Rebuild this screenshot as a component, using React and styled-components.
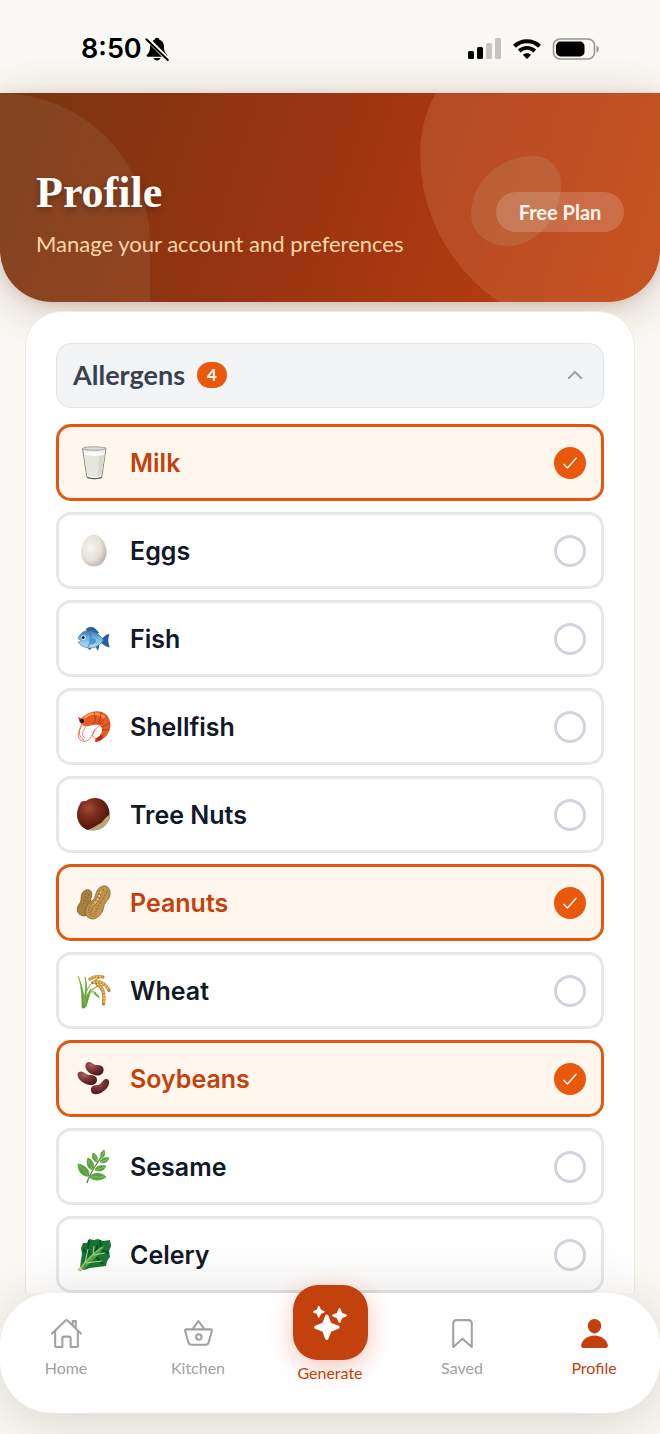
import React, { useState } from 'react';
import styled, { createGlobalStyle } from 'styled-components';
import {
  IoHomeOutline,
  IoBasketOutline,
  IoBookmarkOutline,
  IoPerson,
  IoSparkles,
  IoChevronUp,
  IoCheckmark,
} from 'react-icons/io5';

const GlobalStyle = createGlobalStyle`
  * {
    box-sizing: border-box;
  }

  body {
    margin: 0;
    background: #faf9f5;
    font-family: Lato, "Open Sans", sans-serif;
    -webkit-font-smoothing: antialiased;
  }

  button {
    font-family: inherit;
    border: 0;
    cursor: pointer;
  }
`
const Screen = styled.div`
  height: 100vh;
  display: flex;
  flex-direction: column;
  overflow: hidden;
`
const StatusBar = styled.div`
  flex: none;
  height: 93px;
  padding: 4px 60px 0 81px;
  display: flex;
  align-items: center;
  justify-content: space-between;
`
const StatusGroup = styled.div`
  display: flex;
  align-items: center;
  gap: ${props => props.$gap}px;
`
const Time = styled.span`
  font-family: Inter, sans-serif;
  font-size: 27px;
  line-height: 32px;
  font-weight: 600;
  color: #000;
`
const Header = styled.header`
  flex: none;
  position: relative;
  display: flex;
  align-items: center;
  justify-content: space-between;
  padding: 72px 36px 43px;
  border-radius: 0 0 52px 52px;
  background: linear-gradient(108deg, #78350f 0%, #9a3412 45%, #c2410c 100%);
  box-shadow: 0 8px 48px rgba(100, 50, 20, 0.26), 0 2px 12px rgba(100, 50, 20, 0.14);
`
const Shapes = styled.div`
  position: absolute;
  inset: 0;
  overflow: hidden;
  border-radius: inherit;
`
const LeftShape = styled.div`
  position: absolute;
  left: 0;
  top: 0;
  bottom: 0;
  width: 150px;
  border-radius: 0 150px 0 0;
  background: rgba(190, 180, 150, 0.12);
`
const RightShape = styled.div`
  position: absolute;
  right: -60px;
  top: -60px;
  width: 300px;
  height: 300px;
  border-radius: 40% 60% 40% 60% / 40% 60% 40% 60%;
  background: rgba(220, 130, 88, 0.28);
`
const SmallShape = styled.div`
  position: absolute;
  right: 99px;
  top: 63px;
  width: 90px;
  height: 90px;
  border-radius: 70% 30% 60% 40% / 65% 30% 70% 35%;
  background: rgba(190, 150, 110, 0.25);
`
const Heading = styled.div`
  position: relative;
`
const Title = styled.h1`
  margin: 0 0 8px;
  font-family: "Liberation Serif", serif;
  font-size: 44px;
  line-height: 56px;
  font-weight: bold;
  color: #fff;
  text-shadow: 0 3px 6px rgba(0, 0, 0, 0.3);
`
const Subtitle = styled.p`
  margin: 0;
  font-size: 22px;
  line-height: 30px;
  color: #fed7aa;
`
const Plan = styled.span`
  position: relative;
  min-width: 128px;
  padding: 0 20px;
  border-radius: 20px;
  background: rgba(255, 255, 255, 0.17);
  font-size: 20px;
  line-height: 40px;
  font-weight: bold;
  text-align: center;
  color: #fff7ed;
`
const Content = styled.main`
  flex: 1;
  min-height: 0;
  overflow: hidden;
  padding: 9px 25px 0;
`
const Card = styled.section`
  position: relative;
  padding: 31px 30px;
  border: 1px solid #efe9e4;
  border-radius: 36px;
  background: #fff;
`
const SectionToggle = styled.button`
  width: 100%;
  height: 65px;
  margin-bottom: 16px;
  padding: 0 17px 2px 16px;
  display: flex;
  align-items: center;
  gap: 12px;
  border: 1px solid #e2e5ea;
  border-radius: 15px;
  background: #f3f4f6;
  color: #9ca3af;

  svg {
    margin-left: auto;
  }
`
const SectionName = styled.span`
  font-size: 27px;
  line-height: 32px;
  font-weight: bold;
  color: #374151;
`
const Count = styled.span`
  width: 30px;
  border-radius: 13px;
  background: #ea580c;
  font-size: 17px;
  line-height: 26px;
  font-weight: bold;
  text-align: center;
  color: #fff;
`
const Options = styled.div`
  display: flex;
  flex-direction: column;
  gap: 11px;
`
const Option = styled.label`
  height: 77px;
  padding: 0 15px 0 17px;
  display: flex;
  align-items: center;
  border: 3px solid ${props => props.$on ? '#e2560f' : '#e5e7eb'};
  border-radius: 15px;
  background: ${props => props.$on ? '#fff7ed' : '#fff'};
  color: ${props => props.$on ? '#c2410c' : '#111827'};
  font-family: Inter, sans-serif;
  font-size: 25px;
  line-height: 32px;
  font-weight: 600;
  cursor: pointer;
`
const OptionName = styled.span`
  flex: 1;
  margin-left: 18px;
`
const Tick = styled.span`
  display: grid;
  place-items: center;
  color: #fff;

  input, svg {
    grid-area: 1 / 1;
  }

  svg {
    pointer-events: none;
  }
`
const Checkbox = styled.input`
  appearance: none;
  width: 32px;
  height: 32px;
  margin: 0;
  border: 3px solid #d1d5db;
  border-radius: 50%;
  background: #fff;
  cursor: pointer;

  &:checked {
    border-color: #ea580c;
    background: #ea580c;
  }
`
const TabBar = styled.nav`
  flex: none;
  position: relative;
  height: 120px;
  margin-bottom: 21px;
  display: flex;
  border-radius: 52px;
  background: #fff;
  box-shadow: 0 8px 60px rgba(90, 60, 40, 0.2);
`
const Tab = styled.button`
  flex: 1;
  padding: 24px 0 0;
  display: flex;
  flex-direction: column;
  align-items: center;
  gap: 8px;
  background: none;
  font-size: 16px;
  line-height: 20px;
  color: ${props => props.$active ? '#c2410c' : '#a3a09d'};
`
const GenerateTab = styled(Tab)`
  margin-top: -8px;
  padding: 0;
  gap: 3px;
`
const GenerateIcon = styled.span`
  width: 75px;
  height: 75px;
  display: grid;
  place-items: center;
  border-radius: 25px;
  background: #c2410c;
  color: #fff;
  box-shadow: 0 6px 24px rgba(220, 60, 20, 0.3);
`

const BellOff = () => (
  <svg width="24" height="24" viewBox="0 0 24 24" aria-hidden="true">
    <path d="M12 .8c1.3 0 2.2.8 2.4 2 3 1 4.600 3.500 4.600 6.700 0 4.500 1 6.300 3 8.300.8.900.3 1.900-.8 1.900H2.800c-1.200 0-1.600-1-.8-1.900 2-2 3-3.800 3-8.300 0-3.200 1.600-5.700 4.600-6.700.2-1.200 1.100-2 2.400-2z" />
    <path d="M8.500 21h7c-.4 1.500-1.700 2.400-3.500 2.400S8.900 22.500 8.500 21z" />
    <path d="M2 1.500l21 21.300" stroke="#faf9f5" strokeWidth="4.500" />
    <path d="M1.300 2.200L22.800 23" stroke="#000" strokeWidth="1.900" strokeLinecap="round" />
  </svg>
)

const Signal = () => (
  <svg width="34" height="22" viewBox="0 0 34 22" aria-hidden="true">
    <rect x="0" y="13" width="6" height="8" rx="1.500" />
    <rect x="9" y="9" width="6" height="12" rx="1.500" />
    <rect x="18" y="5" width="6" height="16" rx="1.500" fill="#c6c5c3" />
    <rect x="27" y="0" width="6" height="21" rx="1.500" fill="#c6c5c3" />
  </svg>
)

const Wifi = () => (
  <svg width="30" height="22" viewBox="0 0 30 22" aria-hidden="true">
    <path d="M2.500 8.200c7-6.600 18-6.600 25 0" fill="none" stroke="#000" strokeWidth="4.200" />
    <path d="M7.200 13c4.400-4.100 11.200-4.100 15.600 0" fill="none" stroke="#000" strokeWidth="3.800" />
    <path d="M10.800 16.800c2.400-2.200 6-2.200 8.400 0L15 21z" />
  </svg>
)

const Battery = () => (
  <svg width="48" height="22" viewBox="0 0 48 22" aria-hidden="true">
    <rect x="1.500" y="1" width="41" height="20" rx="6.500" fill="none" stroke="#999794" strokeWidth="1.600" />
    <rect x="4" y="3.600" width="28.500" height="14.800" rx="4.500" />
    <path d="M44.500 7.500c3 1 3 6 0 7z" fill="#999794" />
  </svg>
)

const Milk = () => (
  <>
    <path d="M6.500 3.500L10.800 32c1.500 2.300 13.500 2.300 15 0L30 3.500z" fill="#eeeeec" stroke="#8b8e8e" strokeWidth="1" />
    <path d="M8 9l3.300 21c1.200 1.600 12.700 1.600 14 0L28.700 9c-4 1.500-17 1.500-20.700 0z" fill="#e6e6df" />
    <path d="M23 10l-1 20.500c1.500 0 2.800-.2 3.300-1L28.500 9z" fill="#d8d8d0" />
    <ellipse cx="18.300" cy="9" rx="10.300" ry="1.900" fill="#fffffa" />
    <ellipse cx="18.300" cy="3.500" rx="11.800" ry="1.700" fill="#dcdedc" stroke="#999d9c" strokeWidth=".9" />
    <path d="M11 32.300c3 1.800 12 1.800 14.700 0" fill="none" stroke="#5f6363" strokeWidth="1.200" />
  </>
)

const Egg = () => (
  <>
    <radialGradient id="egg" cx=".38" cy=".4" r=".68">
      <stop offset="0" stopColor="#f7f4f0" />
      <stop offset=".6" stopColor="#e5e0da" />
      <stop offset="1" stopColor="#b9afa7" />
    </radialGradient>
    <path d="M17.500 1.800C24 1.800 30.500 10 30.500 19c0 8.500-5.500 14.500-12.700 14.500S5 27.500 5 19C5 10 11 1.800 17.500 1.800z" fill="url(#egg)" />
  </>
)

const Fish = () => (
  <>
    <linearGradient id="fish" x1="0" y1="0" x2="0" y2="1">
      <stop offset="0" stopColor="#3976b2" />
      <stop offset=".5" stopColor="#74bce5" />
      <stop offset="1" stopColor="#b5dff2" />
    </linearGradient>
    <path d="M10 8.500c3-3.500 9-3.200 12.500 3.500l-5 1zM24 19c4-2 6-6 9-5.500-1.500 4-1.500 8 .3 12.500-4-.5-6-3-9.300-5z" fill="#28619c" stroke="#1e4978" strokeWidth=".6" />
    <path d="M11 24l2 5c2-.5 2.500-2 3.500-4zM19 25l3 5 1.500-7z" fill="#28619c" />
    <path d="M2 17.500C5 10 12 8 18 10.500c4 1.700 6.500 5 9.500 8.500-3 4.500-7.500 8-13.500 8-5 0-10-2.500-12-6 1.500 0 2.500-.5 3-1.500z" fill="url(#fish)" stroke="#366b9a" strokeWidth=".6" />
    <path d="M12 9.500c4 5 4 11-.5 17" fill="none" stroke="#3c7bae" />
    <path d="M13 18c5-2 7 0 7 2-1 3-4 4-6 3z" fill="#4a98cc" />
    <circle cx="7.500" cy="16.500" r="2.200" fill="#fff" />
    <circle cx="7.200" cy="16.500" r="1.500" fill="#111" />
  </>
)

const Shrimp = () => (
  <>
    <path d="M10 14C1 20 0 29 6 32c6 2 10-4 13-12M7 13C2 20 2 28 8 31M12 15c-6 6-7 12-3 14M23 17c-8 6-8 12-2 13 3 0 5-1 6-4" fill="none" stroke="#df6e56" strokeWidth=".9" />
    <path d="M3 12C9 4 18 .5 26 3c8 3 10 12 7.500 18-1.500 4.500-4 7.500-7.500 9.500-2 2-5 3-7.500 2 .5-2 3-4 5-5 2.500-3 3.500-7 1.500-10-3-3-8-1.500-12-.5-4 1-7-.5-10-5z" fill="#e55b24" />
    <path d="M8 9c6-5.500 15-6 21 0" fill="none" stroke="#ff9b50" strokeWidth="2.500" />
    <path d="M18 3c1 4 2 7 0 12M25 3c0 5-1 8-3 12M31 7c-2 3-5 5-7 8M34 14l-8 4M33.500 21l-7.500 0M27 29l-3-4" fill="none" stroke="#a93416" strokeWidth=".9" />
    <path d="M2 8l6 3-4 2zM19 32c2-5 5-5 8-6l-2 5z" fill="#b52c1d" />
    <circle cx="6" cy="12" r="2" fill="#291612" />
  </>
)

const Chestnut = () => (
  <>
    <radialGradient id="nut" cx=".36" cy=".32" r=".72">
      <stop offset="0" stopColor="#a04a33" />
      <stop offset=".4" stopColor="#7c2b1b" />
      <stop offset="1" stopColor="#4c130b" />
    </radialGradient>
    <path d="M31 9c5 7 4 14-1 19-5 6-14 7-21 4z" fill="#b5a778" />
    <path d="M4 7c1-3 3-3 6-3C15 0 23 0 28 4c4 4 6 9 5 14-4 3-5 5-8 8-5 3-9 5-13 7C5 31 1 24 1 18c0-4 1-8 3-11z" fill="url(#nut)" />
  </>
)

const Peanuts = () => (
  <>
    <path d="M10 5c4-1 7 2 5.500 6-1 3-1 4 0 7 2 6-2 12-7 13-5 0-8-4-7-8 .5-4 3-4 3.500-8C5 10 6 6 10 5z" fill="#a8803f" stroke="#745125" strokeWidth=".7" />
    <path d="M27 1c5-1 8 4 7 9-1 6-5 6-6 11-1 7-6 13-12 13-6-1-8-6-6-11 2-6 7-6 9-11 1-5 3-10 8-11z" fill="#c0944c" stroke="#81592a" strokeWidth=".7" />
    <path d="M28 4c-6 5-2 9-7 14-5 4-7 8-6 13M31 6c-3 7-5 10-8 14-3 5-3 8-6 12M24 5c-2 7-3 9-8 13-3 3-4 6-3 10M10 8c-1 6-1 9-4 13M13 9c-3 7 0 9-4 15" fill="none" stroke="#8d6632" strokeDasharray="2 1.200" />
    <path d="M25 6c-2 6-3 10-8 14" fill="none" stroke="#eed28f" strokeWidth="1.500" strokeDasharray="2 2" />
  </>
)

const Wheat = () => (
  <>
    <path d="M6 34C6 22 5 10 2 3c4 9 6 18 6.500 26C9 19 10 9 9 4c3 9 1 20 0 31H6zM9 29c2-8 5-12 6-13-1 5-3 11-5 18z" fill="#5ca337" stroke="#5ca337" strokeWidth=".6" />
    <path d="M7 30C9 18 15 7 26 4M8 32c2-12 9-19 21-20M9 31c2-12 7-14 11-11" fill="none" stroke="#83a843" strokeWidth="1.100" />
    <path d="M14 6c4-3 8-3 13-2M17 9.500c7-2 12-.5 16 8M21 11c6 3 8 9 6.500 20" fill="none" stroke="#b97a2b" strokeWidth="3.200" strokeLinecap="round" />
    <path d="M14 6c4-3 8-3 13-2M17 9.500c7-2 12-.5 16 8M21 11c6 3 8 9 6.500 20" fill="none" stroke="#eab656" strokeWidth="2.400" strokeDasharray="2.400 .8" />
    <path d="M17 20c3-1 6 2 7 6-3-2-4-3-7-6z" fill="#72b64a" />
  </>
)

const Beans = () => (
  <>
    <radialGradient id="bean" cx=".35" cy=".25" r=".8">
      <stop offset="0" stopColor="#a36563" />
      <stop offset=".45" stopColor="#7a3436" />
      <stop offset="1" stopColor="#4a181c" />
    </radialGradient>
    <path d="M11 1.500c4-2 6 2 9 2.500 5 0 8 1 7.500 5.500-.5 5-6 6-10.500 4C11 12 7 5 11 1.500z" fill="url(#bean)" />
    <path d="M3 11c4-2 6 2 10 3 5 0 8 1 8 5 0 5-6 6-11 4C4 21-1 14 3 11z" fill="url(#bean)" />
    <path d="M31 18c4 1 2 8-2 11-5 5-13 6-14 1-1-5 3-6 7-6 4-1 5-7 9-6z" fill="url(#bean)" />
  </>
)

const Herb = () => (
  <>
    <path d="M11 34C13 25 20 16 26 7" fill="none" stroke="#5b7d42" strokeWidth="1.300" />
    <path d="M26 9c-3-3 0-7 2-8 2 4 0 7-2 8zM24 13c1-4 5-5 9-4-1 4-5 6-9 4zM21 13c-5-1-5-6-4-9 4 2 5 5 4 9zM19 21c1-4 6-5 11-4-2 5-7 6-11 4zM17 21c-6-1-7-8-5-12 5 2 7 8 5 12zM13 28c5-5 12-5 17 0-5 4-12 4-17 0zM13 27C7 28 2 23 2 15c6 1 12 5 11 12z" fill="#56a13f" stroke="#56a13f" strokeWidth=".8" />
    <path d="M28 2l-2 6M32 10l-7 3M18 6l3 6M29 18l-9 3M12 11l5 10M29 28H15M3 16l9 10" fill="none" stroke="#a1cf70" strokeWidth=".7" />
  </>
)

const Lettuce = () => (
  <>
    <path d="M7 6l4 0 2-4 5 1 4-1 5 2 7-1 1 6-2 5 1 6-3 4-1 5-8 1-8 1-6 2-4-2 1-8 1-6-1-6z" fill="#187635" />
    <path d="M13 3l-1 9 2 5M24 3l1 10 8 3M7 12l5 6M20 20l7 7M22 8l-3 7" fill="none" stroke="#0a5427" strokeWidth="2" />
    <path d="M2 33C8 23 16 17 29 8 23 18 15 26 5 34z" fill="#5aa04a" />
    <path d="M2 34C10 25 17 16 26 10M9 26l3-14M10 26l16-2M17 18l1-9M18 18l11-2" fill="none" stroke="#b5d894" strokeWidth="1" />
    <path d="M1.500 32l3-2 2 2-2 3z" fill="#d8c79c" />
  </>
)

const allergens = [
  { name: 'Milk', art: Milk },
  { name: 'Eggs', art: Egg },
  { name: 'Fish', art: Fish },
  { name: 'Shellfish', art: Shrimp },
  { name: 'Tree Nuts', art: Chestnut },
  { name: 'Peanuts', art: Peanuts },
  { name: 'Wheat', art: Wheat },
  { name: 'Soybeans', art: Beans },
  { name: 'Sesame', art: Herb },
  { name: 'Celery', art: Lettuce },
]

const App = () => {
  const [selected, setSelected] = useState(['Milk', 'Peanuts', 'Soybeans', 'Mustard'])
  const [open, setOpen] = useState(true)

  const toggle = (name) => {
    setSelected(selected.includes(name) ? selected.filter(n => n !== name) : [...selected, name])
  }

  return (
    <Screen>
      <GlobalStyle />
      <StatusBar>
        <StatusGroup $gap={3}>
          <Time>8:50</Time>
          <BellOff />
        </StatusGroup>
        <StatusGroup $gap={10}>
          <Signal />
          <Wifi />
          <Battery />
        </StatusGroup>
      </StatusBar>
      <Header>
        <Shapes>
          <LeftShape />
          <RightShape />
          <SmallShape />
        </Shapes>
        <Heading>
          <Title>Profile</Title>
          <Subtitle>Manage your account and preferences</Subtitle>
        </Heading>
        <Plan>Free Plan</Plan>
      </Header>
      <Content>
        <Card>
          <SectionToggle type="button" aria-expanded={open} onClick={() => setOpen(!open)}>
            <SectionName>Allergens</SectionName>
            <Count>{selected.length}</Count>
            <IoChevronUp size={22} />
          </SectionToggle>
          {open && (
            <Options>
              {allergens.map(({ name, art: Art }) => {
                const on = selected.includes(name)
                return (
                  <Option key={name} $on={on}>
                    <svg width="36" height="36" viewBox="0 0 36 36" aria-hidden="true"><Art /></svg>
                    <OptionName>{name}</OptionName>
                    <Tick>
                      <Checkbox type="checkbox" checked={on} onChange={() => toggle(name)} />
                      {on && <IoCheckmark size={20} />}
                    </Tick>
                  </Option>
                )
              })}
            </Options>
          )}
        </Card>
      </Content>
      <TabBar>
        <Tab type="button"><IoHomeOutline size={33} />Home</Tab>
        <Tab type="button"><IoBasketOutline size={33} />Kitchen</Tab>
        <GenerateTab type="button" $active>
          <GenerateIcon><IoSparkles size={34} /></GenerateIcon>
          Generate
        </GenerateTab>
        <Tab type="button"><IoBookmarkOutline size={33} />Saved</Tab>
        <Tab type="button" $active><IoPerson size={33} />Profile</Tab>
      </TabBar>
    </Screen>
  )
}

export default App
